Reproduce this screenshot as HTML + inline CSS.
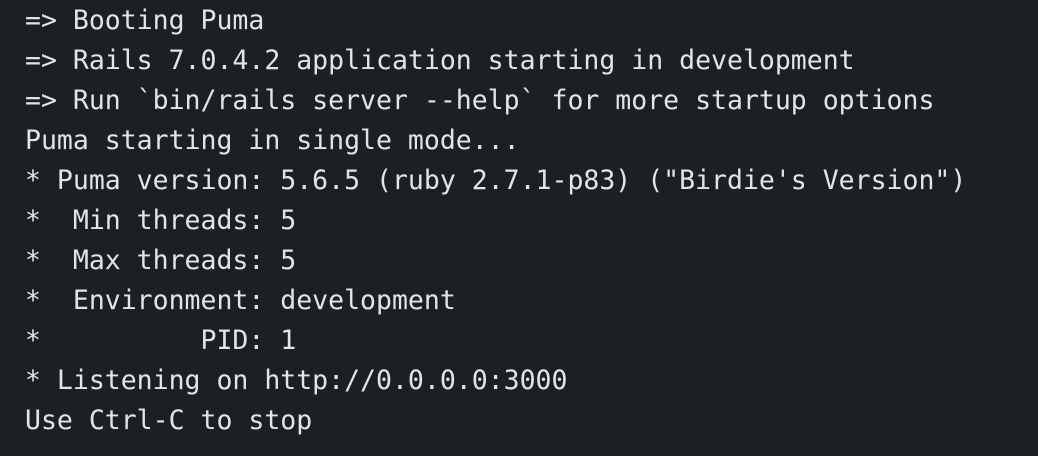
<!DOCTYPE html>
<html><head><style>
html,body{margin:0;padding:0;}
body{width:1038px;height:456px;background:#1c1f24;overflow:hidden;}
pre{margin:0;position:absolute;left:25px;top:1px;font-family:"DejaVu Sans Mono","Liberation Mono",monospace;font-size:26.5px;line-height:40px;color:#e3e4e6;}
</style></head><body>
<pre>=&gt; Booting Puma
=&gt; Rails 7.0.4.2 application starting in development
=&gt; Run `bin/rails server --help` for more startup options
Puma starting in single mode...
* Puma version: 5.6.5 (ruby 2.7.1-p83) ("Birdie's Version")
*  Min threads: 5
*  Max threads: 5
*  Environment: development
*          PID: 1
* Listening on http://0.0.0.0:3000
Use Ctrl-C to stop</pre>
</body></html>
